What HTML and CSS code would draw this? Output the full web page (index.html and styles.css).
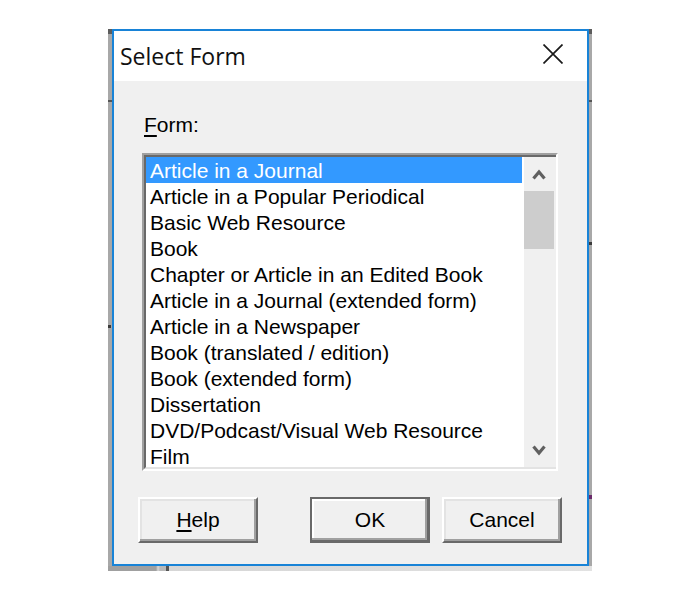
FILE: index.html
```html
<!DOCTYPE html>
<html lang="en">
<head>
<meta charset="utf-8">
<title>Select Form</title>
<link rel="stylesheet" href="styles.css">
</head>
<body>
<div class="desktop">
  <div class="backwin">
    <div class="backwin-top"></div>
    <div class="backwin-mark mark-a"></div>
    <div class="backwin-mark mark-b"></div>
    <div class="backwin-mark mark-d"></div>
    <div class="backwin-mark mark-e"></div>
    <div class="backwin-mark mark-c"></div>
    <div class="backwin-bottom"></div>
  </div>
  <div class="dialog">
    <div class="titlebar">
      <span class="title">Select Form</span>
      <svg class="close" width="20" height="20" viewBox="0 0 20 20" aria-label="Close"><path d="M0.5 0.5 L19.5 19.5 M19.5 0.5 L0.5 19.5" stroke="#1a1a1a" stroke-width="1.7" fill="none"/></svg>
    </div>
    <div class="body">
      <div class="label"><u>F</u>orm:</div>
      <div class="listbox">
        <div class="listinner">
          <ul class="items">
            <li class="item selected">Article in a Journal</li>
            <li class="item">Article in a Popular Periodical</li>
            <li class="item">Basic Web Resource</li>
            <li class="item">Book</li>
            <li class="item">Chapter or Article in an Edited Book</li>
            <li class="item">Article in a Journal (extended form)</li>
            <li class="item">Article in a Newspaper</li>
            <li class="item">Book (translated / edition)</li>
            <li class="item">Book (extended form)</li>
            <li class="item">Dissertation</li>
            <li class="item">DVD/Podcast/Visual Web Resource</li>
            <li class="item">Film</li>
          </ul>
          <div class="scrollbar">
            <div class="sb-btn"><svg width="14" height="11" viewBox="0 0 14 11"><path d="M1.5 9.5 L7 3 L12.5 9.5" stroke="#606060" stroke-width="3.2" fill="none"/></svg></div>
            <div class="sb-thumb"></div>
            <div class="sb-track"></div>
            <div class="sb-btn sb-down"><svg width="14" height="11" viewBox="0 0 14 11"><path d="M1.5 1.5 L7 8 L12.5 1.5" stroke="#606060" stroke-width="3.2" fill="none"/></svg></div>
          </div>
        </div>
      </div>
      <div class="buttons">
        <button class="btn"><u>H</u>elp</button>
        <div class="spacer"></div>
        <button class="btn default">OK</button>
        <button class="btn">Cancel</button>
      </div>
    </div>
  </div>
</div>
</body>
</html>
```
FILE: styles.css
```css
html, body {
  margin: 0;
  padding: 0;
  background: #ffffff;
}

.desktop {
  position: relative;
  width: 700px;
  height: 600px;
  overflow: hidden;
  background: #ffffff;
}

.backwin {
  position: absolute;
  left: 108px;
  top: 29px;
  width: 484px;
  height: 542px;
  background: #a8a8a8;
}

.backwin-top {
  height: 5px;
  background: #5c5c5c;
}

.backwin-mark {
  position: absolute;
  background: #555555;
}

.mark-a { left: 0; top: 71px; width: 4px; height: 2px; }
.mark-b { right: 0; top: 71px; width: 3px; height: 2px; }
.mark-d { right: 0; top: 213px; width: 3px; height: 3px; background: #3a3a3a; }
.mark-e { left: 0; top: 296px; width: 3px; height: 3px; background: #3a3a3a; }
.mark-c { right: 0; top: 466px; width: 3px; height: 4px; background: #6a2a6a; }

.backwin-bottom {
  position: absolute;
  left: 0;
  right: 0;
  bottom: 0;
  height: 5px;
  background: linear-gradient(to right, #a0a0a0 0, #a0a0a0 48px, #d8d8d8 50px, #b8b8b8 52px, #b8b8b8 58px, #555 58px, #555 61px, #d6d6d6 61px, #e2e2e2 100%);
}

.dialog {
  position: absolute;
  left: 112px;
  top: 29px;
  width: 477px;
  height: 537px;
  box-sizing: border-box;
  border: 2px solid #1883d7;
  background: #f0f0f0;
  display: flex;
  flex-direction: column;
}

.titlebar {
  height: 50px;
  flex: none;
  background: #ffffff;
  display: flex;
  align-items: flex-start;
  justify-content: space-between;
}

.title {
  padding-left: 6px;
  font-family: "Open Sans", "Noto Sans", sans-serif;
  font-size: 23px;
  line-height: 50px;
  color: #111111;
}

.close {
  margin-top: 13px;
  margin-right: 24px;
  display: block;
}

.body {
  flex: 1;
  display: flex;
  flex-direction: column;
  padding: 32px 25px 0 28px;
  font-family: "Liberation Sans", Arial, sans-serif;
  font-size: 21px;
  color: #000000;
}

.label {
  line-height: 24px;
  height: 24px;
  padding-left: 2px;
  margin-bottom: 1px;
}

.label u, .btn u {
  text-decoration-thickness: 2px;
  text-underline-offset: 3px;
}

.listbox {
  margin-top: 15px;
  width: 416px;
  height: 318px;
  box-sizing: border-box;
  border: 2px solid;
  border-color: #a0a0a0 #ffffff #ffffff #a0a0a0;
}

.listinner {
  height: 100%;
  box-sizing: border-box;
  border-top: 2px solid #696969;
  border-left: 2px solid #696969;
  border-bottom: 2px solid #e3e3e3;
  background: #ffffff;
  display: flex;
  overflow: hidden;
}

.items {
  list-style: none;
  margin: 0;
  padding: 0;
  flex: 1;
  overflow: hidden;
}

.item {
  height: 26px;
  box-sizing: border-box;
  padding: 2px 0 0 4px;
  margin-right: 2px;
  line-height: 24px;
  white-space: nowrap;
}

.item.selected {
  background: #3399ff;
  color: #ffffff;
}

.scrollbar {
  width: 32px;
  flex: none;
  background: #f0f0f0;
  display: flex;
  flex-direction: column;
}

.sb-btn {
  height: 34px;
  flex: none;
  display: flex;
  align-items: center;
  justify-content: center;
  padding-right: 2px;
}

.sb-btn svg {
  display: block;
}

.sb-down {
  padding-top: 4px;
}

.sb-thumb {
  height: 58px;
  flex: none;
  width: 30px;
  background: #cdcdcd;
}

.sb-track {
  flex: 1;
}

.buttons {
  margin-top: 26px;
  display: flex;
  gap: 12px;
  padding-left: 0;
}

.spacer {
  flex: 1;
}

.btn {
  width: 120px;
  height: 46px;
  box-sizing: border-box;
  margin: 0;
  padding: 0;
  font-family: "Liberation Sans", Arial, sans-serif;
  font-size: 21px;
  color: #000000;
  background: #f0f0f0;
  border: 2px solid;
  border-color: #ffffff #696969 #696969 #ffffff;
  box-shadow: inset -2px -2px #a0a0a0, inset 2px 2px #e3e3e3;
  border-radius: 0;
}

.btn:first-child {
  margin-left: -4px;
}

.btn.default {
  border: 2px solid #696969;
  box-shadow: inset -1px -1px #696969, inset -3px -3px #a0a0a0, inset 2px 2px #ffffff;
}
```
